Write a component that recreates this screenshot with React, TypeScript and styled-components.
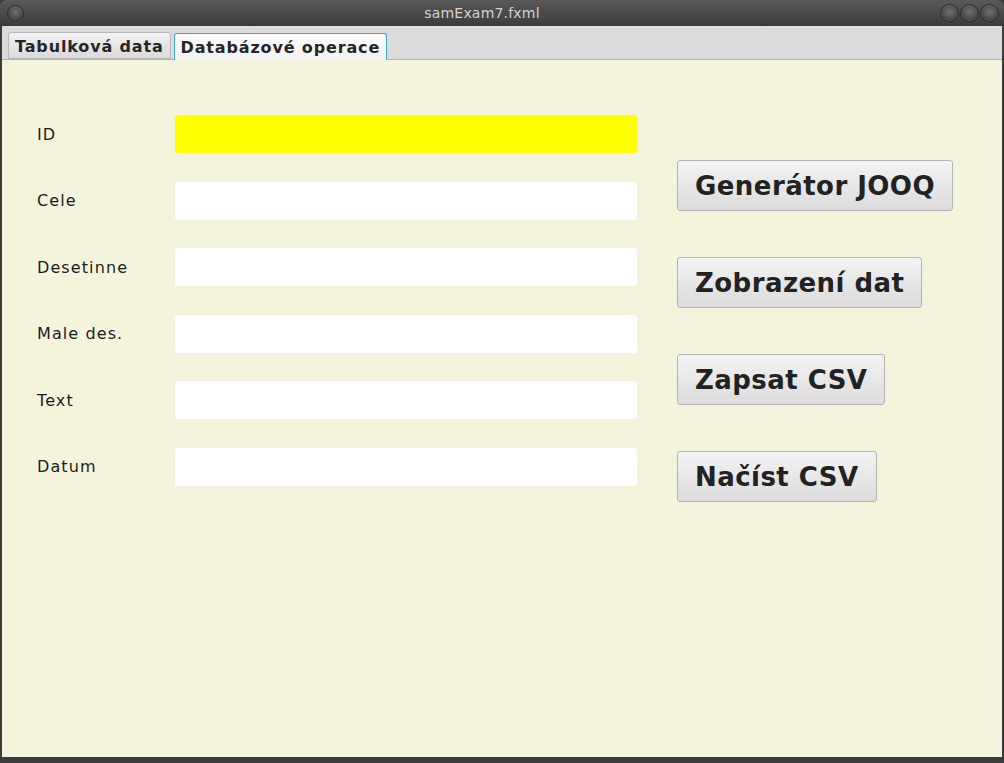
import React from "react";
import styled, { createGlobalStyle } from "styled-components";

const Global = createGlobalStyle`
  html, body { margin: 0; padding: 0; background: #3c3c3c; }
  * { box-sizing: border-box; }
`;

const Window = styled.div`
  width: 1004px;
  height: 763px;
  display: flex;
  flex-direction: column;
  background: #3c3c3c;
  padding: 0 2px 6px 2px;
  border-radius: 6px 6px 0 0;
  overflow: hidden;
  font-family: "DejaVu Sans", sans-serif;
`;

const TitleBar = styled.div`
  height: 26px;
  margin: 0 -2px;
  flex: none;
  position: relative;
  display: flex;
  align-items: center;
  justify-content: center;
  background: linear-gradient(#5a5a5a, #3b3b3b);
  border-radius: 6px 6px 0 0;
`;

const Title = styled.span`
  color: #d2d2d2;
  font-size: 14px;
  letter-spacing: 0.2px;
  margin-left: -40px;
`;

const Knob = styled.span<{ $size: number }>`
  width: ${(p) => p.$size}px;
  height: ${(p) => p.$size}px;
  border-radius: 50%;
  background: radial-gradient(circle at 50% 40%, #707070 0%, #4a4a4a 60%, #3a3a3a 100%);
  border: 1px solid #2c2c2c;
  box-shadow: inset 0 1px 1px rgba(255, 255, 255, 0.15), 0 1px 0 rgba(255, 255, 255, 0.08);
  display: inline-block;
`;

const LeftKnobs = styled.div`
  position: absolute;
  left: 7px;
  top: 5px;
  display: flex;
`;

const RightKnobs = styled.div`
  position: absolute;
  right: 5px;
  top: 4px;
  display: flex;
  gap: 1px;
`;

const TabBar = styled.div`
  height: 34px;
  flex: none;
  display: flex;
  align-items: flex-end;
  gap: 3px;
  padding: 0 0 0 6px;
  background: #dcdcdc;
  border-bottom: 1px solid #b4b4b4;
`;

const Tab = styled.div<{ $active?: boolean }>`
  height: 27px;
  padding: 1px 6px 0 6px;
  display: flex;
  align-items: center;
  font-weight: bold;
  font-size: 16px;
  letter-spacing: 0.85px;
  color: #262626;
  border-radius: 3px 3px 0 0;
  margin-bottom: ${(p) => (p.$active ? "-1px" : "0")};
  border: 1px solid ${(p) => (p.$active ? "#3aa6dc" : "#b8b8b8")};
  border-bottom: ${(p) => (p.$active ? "none" : "1px solid #b8b8b8")};
  background: ${(p) =>
    p.$active ? "linear-gradient(#fbfbfb, #f2f2f2)" : "linear-gradient(#f2f2f2, #dadada)"};
`;

const Content = styled.div`
  flex: 1;
  background: #f4f4dc;
  padding: 55px 0 0 35px;
  display: flex;
  align-items: flex-start;
  gap: 40px;
`;

const Form = styled.div`
  display: grid;
  grid-template-columns: 138px 462px;
  grid-auto-rows: 38px;
  row-gap: 28.6px;
  align-items: center;
`;

const Label = styled.span`
  font-family: "DejaVu Sans", sans-serif;
  font-size: 16px;
  letter-spacing: 1.1px;
  color: #1c1c1c;
`;

const Field = styled.input<{ $highlight?: boolean }>`
  height: 38px;
  width: 462px;
  border: none;
  outline: none;
  border-radius: 3px;
  background: ${(p) => (p.$highlight ? "#ffff00" : "#ffffff")};
  font-size: 15px;
  padding: 0 8px;
`;

const Buttons = styled.div`
  padding-top: 45px;
  display: flex;
  flex-direction: column;
  align-items: flex-start;
  gap: 46px;
`;

const Button = styled.button`
  height: 51px;
  padding: 0 17px;
  font-family: "DejaVu Sans", sans-serif;
  font-weight: bold;
  font-size: 26px;
  letter-spacing: 0.45px;
  color: #222;
  border: 1px solid #b3b3b3;
  border-radius: 3px;
  background: linear-gradient(#f3f3f3, #dcdcdc);
  cursor: pointer;
`;

const fields = [
  { label: "ID", highlight: true },
  { label: "Cele" },
  { label: "Desetinne" },
  { label: "Male des." },
  { label: "Text" },
  { label: "Datum" },
];

const actions = ["Generátor JOOQ", "Zobrazení dat", "Zapsat CSV", "Načíst CSV"];

export default function App() {
  return (
    <>
      <Global />
      <Window>
        <TitleBar>
          <LeftKnobs>
            <Knob $size={17} />
          </LeftKnobs>
          <Title>samExam7.fxml</Title>
          <RightKnobs>
            <Knob $size={19} />
            <Knob $size={19} />
            <Knob $size={19} />
          </RightKnobs>
        </TitleBar>
        <TabBar>
          <Tab>Tabulková data</Tab>
          <Tab $active>Databázové operace</Tab>
        </TabBar>
        <Content>
          <Form>
            {fields.map((f) => (
              <React.Fragment key={f.label}>
                <Label>{f.label}</Label>
                <Field $highlight={f.highlight} />
              </React.Fragment>
            ))}
          </Form>
          <Buttons>
            {actions.map((a) => (
              <Button key={a}>{a}</Button>
            ))}
          </Buttons>
        </Content>
      </Window>
    </>
  );
}
